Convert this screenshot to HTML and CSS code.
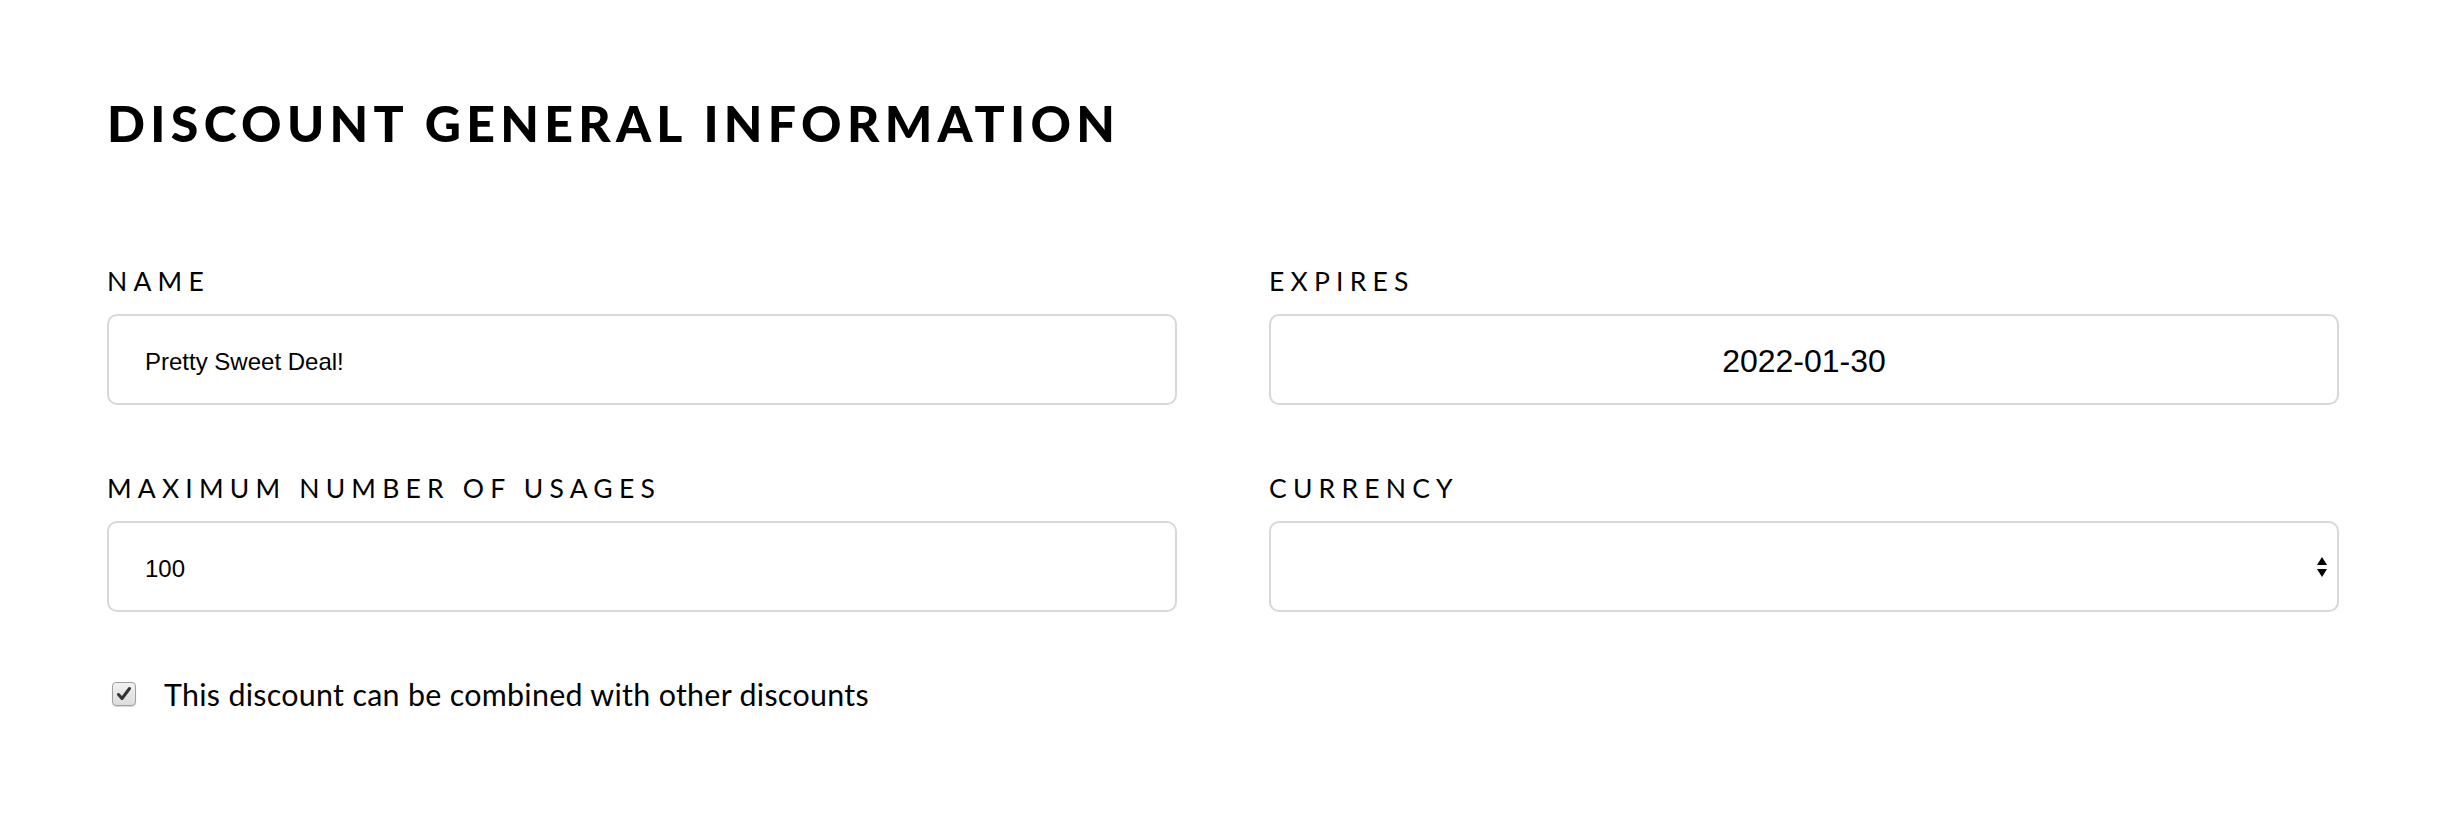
FILE: index.html
```html
<!DOCTYPE html>
<html lang="en">
<head>
<meta charset="utf-8">
<title>Discount General Information</title>
<link rel="stylesheet" href="styles.css">
</head>
<body>
<main class="page">
  <h1 class="title">DISCOUNT GENERAL INFORMATION</h1>
  <form class="form">
    <div class="grid">
      <div class="field">
        <label class="label" for="name">NAME</label>
        <div class="control"><input id="name" class="input" type="text" value="Pretty Sweet Deal!"></div>
      </div>
      <div class="field">
        <label class="label" for="expires">EXPIRES</label>
        <div class="control date"><span class="date-value">2022-01-30</span></div>
      </div>
      <div class="field">
        <label class="label" for="usages">MAXIMUM NUMBER OF USAGES</label>
        <div class="control"><input id="usages" class="input" type="text" value="100"></div>
      </div>
      <div class="field">
        <label class="label" for="currency">CURRENCY</label>
        <div class="control select">
          <svg class="arrows" width="10" height="20" viewBox="0 0 10 20" aria-hidden="true">
            <path d="M5 0 L10 8 L0 8 Z" fill="#000"/>
            <path d="M0 12 L10 12 L5 20 Z" fill="#000"/>
          </svg>
        </div>
      </div>
    </div>
    <label class="check-row">
      <span class="checkbox">
        <svg width="16" height="16" viewBox="0 0 16 16" aria-hidden="true">
          <path d="M2.5 8.5 L6 12.5 L13.5 2.5" fill="none" stroke="#333" stroke-width="3" stroke-linecap="round" stroke-linejoin="round"/>
        </svg>
      </span>
      <span class="check-text">This discount can be combined with other discounts</span>
    </label>
  </form>
</main>
</body>
</html>
```
FILE: styles.css
```css
html, body {
  margin: 0;
  padding: 0;
  background: #fff;
}

body {
  font-family: Lato, "Open Sans", sans-serif;
  color: #000;
}

.page {
  padding: 98px 109px 0 107px;
}

.title {
  margin: 0;
  font-family: Lato, sans-serif;
  font-weight: 900;
  font-size: 50px;
  line-height: 50px;
  letter-spacing: 5.3px;
}

.form {
  margin-top: 118px;
}

.grid {
  display: grid;
  grid-template-columns: 1fr 1fr;
  column-gap: 92px;
  row-gap: 68px;
}

.field {
  display: flex;
  flex-direction: column;
  gap: 18px;
}

.label {
  font-size: 26.5px;
  line-height: 30px;
  letter-spacing: 6.2px;
  font-weight: 400;
}

.control {
  box-sizing: border-box;
  height: 91px;
  border: 2px solid #d8d8d8;
  border-radius: 10px;
  background: #fff;
  display: flex;
  align-items: center;
}

.input {
  border: 0;
  outline: none;
  background: transparent;
  width: 100%;
  padding: 4px 0 0 36px;
  font-family: "Liberation Sans", Arial, sans-serif;
  font-size: 24px;
  color: #000;
}

.date {
  justify-content: center;
  padding-top: 4px;
}

.date-value {
  font-family: "Liberation Sans", Arial, sans-serif;
  font-size: 32px;
}

.select {
  justify-content: flex-end;
  padding-right: 10px;
}

.arrows {
  display: block;
}

.check-row {
  display: flex;
  align-items: center;
  gap: 28px;
  margin-top: 65px;
  padding-left: 5px;
}

.checkbox {
  box-sizing: border-box;
  width: 24px;
  height: 24px;
  border: 1px solid #a0a0a0;
  border-radius: 4px;
  background: linear-gradient(#f2f2f2, #dcdcdc);
  box-shadow: 0 1px 1px rgba(0,0,0,0.15);
  display: flex;
  align-items: center;
  justify-content: center;
}

.check-text {
  font-size: 30.4px;
  line-height: 34px;
  letter-spacing: 0.3px;
}
```
